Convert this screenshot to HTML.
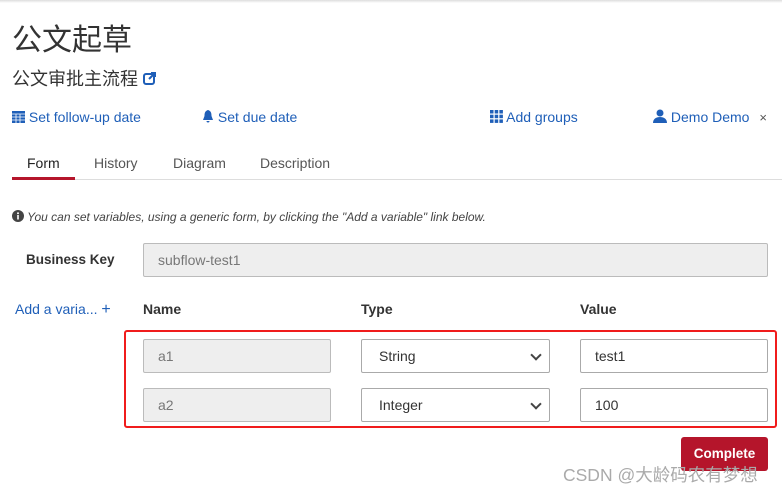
<!DOCTYPE html>
<html><head><meta charset="utf-8"><style>
*{margin:0;padding:0;box-sizing:border-box}
body{width:782px;height:493px;background:#fff;position:relative;overflow:hidden;font-family:"Liberation Sans","Noto Sans CJK SC",sans-serif;color:#333}
.a{position:absolute;white-space:nowrap}
.lnk{color:#1f5fb8;font-size:14px}
.inp{position:absolute;border:1px solid #aaa;border-radius:2px;height:34px;font-size:14px;line-height:32px;padding-left:14px;color:#333;background:#fff}
.ro{background:#eee;color:#777;border-color:#bbb}
.sel::after{content:"";position:absolute;right:9px;top:11px;width:6px;height:6px;border-right:2px solid #444;border-bottom:2px solid #444;transform:rotate(45deg)}
.h{font-weight:bold;font-size:14px;color:#333}
</style></head><body>
<div class="a" style="left:0;top:0;width:782px;height:3px;background:linear-gradient(#ddd,#fff)"></div>
<div class="a" style="left:12px;top:15px;font-size:30px;color:#333">公文起草</div>
<div class="a" style="left:12px;top:65px;font-size:18px;color:#333">公文审批主流程 <svg width="13" height="13" viewBox="0 0 13 13" style="vertical-align:0"><rect x="1" y="2" width="10" height="10" rx="2" fill="none" stroke="#1f5fb8" stroke-width="2"/><path d="M6 7L12 1M8 1h4v4" stroke="#1f5fb8" stroke-width="2" fill="none"/></svg></div>
<div class="a lnk" style="left:12px;top:109px"><svg width="13" height="13" viewBox="0 0 13 13" style="vertical-align:-1px"><rect x="0" y="1" width="13" height="12" fill="#1f5fb8"/><path d="M0 4h13M0 7h13M0 10h13M4 4v9M8 4v9" stroke="#fff" stroke-width="0.8"/></svg> Set follow-up date</div>
<div class="a lnk" style="left:202px;top:109px"><svg width="12" height="13" viewBox="0 0 12 13" style="vertical-align:-1px"><path d="M6 0C3 1 2.5 3 2.5 6L1 10h10L9.5 6C9.5 3 9 1 6 0z M4.5 11a1.5 1.5 0 0 0 3 0z" fill="#1f5fb8"/></svg> Set due date</div>
<div class="a lnk" style="left:490px;top:109px"><svg width="13" height="13" viewBox="0 0 13 13" style="vertical-align:-1px" fill="#1f5fb8"><rect x="0" y="0" width="3.5" height="3.5"/><rect x="4.7" y="0" width="3.5" height="3.5"/><rect x="9.4" y="0" width="3.5" height="3.5"/><rect x="0" y="4.7" width="3.5" height="3.5"/><rect x="4.7" y="4.7" width="3.5" height="3.5"/><rect x="9.4" y="4.7" width="3.5" height="3.5"/><rect x="0" y="9.4" width="3.5" height="3.5"/><rect x="4.7" y="9.4" width="3.5" height="3.5"/><rect x="9.4" y="9.4" width="3.5" height="3.5"/></svg> Add groups</div>
<div class="a lnk" style="left:653px;top:109px"><svg width="14" height="14" viewBox="0 0 14 14" style="vertical-align:-1px" fill="#1f5fb8"><circle cx="7" cy="4" r="3.5"/><path d="M0 14c0-4 3-6 7-6s7 2 7 6z"/></svg> Demo Demo <span style="color:#555;font-size:13px;margin-left:6px">×</span></div>
<div class="a" style="left:27px;top:155px;font-size:14px;color:#222">Form</div>
<div class="a" style="left:94px;top:155px;font-size:14px;color:#555">History</div>
<div class="a" style="left:173px;top:155px;font-size:14px;color:#555">Diagram</div>
<div class="a" style="left:260px;top:155px;font-size:14px;color:#555">Description</div>
<div class="a" style="left:12px;top:179px;width:770px;height:1px;background:#ddd"></div>
<div class="a" style="left:12px;top:177px;width:63px;height:3px;background:#b5152b"></div>
<div class="a" style="left:12px;top:210px;font-size:12px;font-style:italic;color:#444"><svg width="12" height="12" viewBox="0 0 12 12" style="vertical-align:-1px"><circle cx="6" cy="6" r="6" fill="#444"/><rect x="5.2" y="5" width="1.6" height="4.5" fill="#fff"/><circle cx="6" cy="3.3" r="1" fill="#fff"/></svg> You can set variables, using a generic form, by clicking the "Add a variable" link below.</div>
<div class="a h" style="left:26px;top:252px;font-size:13.5px">Business Key</div>
<div class="inp ro" style="left:143px;top:243px;width:625px">subflow-test1</div>
<div class="a lnk" style="left:15px;top:301px">Add a varia... <span style="font-size:16px">+</span></div>
<div class="a h" style="left:143px;top:301px">Name</div>
<div class="a h" style="left:361px;top:301px">Type</div>
<div class="a h" style="left:580px;top:301px">Value</div>
<div class="a" style="left:124px;top:330px;width:653px;height:98px;border:2px solid #f01c1c;border-radius:3px"></div>
<div class="inp ro" style="left:143px;top:339px;width:188px">a1</div>
<div class="inp sel" style="left:361px;top:339px;width:189px;padding-left:17px">String</div>
<div class="inp" style="left:580px;top:339px;width:188px">test1</div>
<div class="inp ro" style="left:143px;top:388px;width:188px">a2</div>
<div class="inp sel" style="left:361px;top:388px;width:189px;padding-left:17px">Integer</div>
<div class="inp" style="left:580px;top:388px;width:188px">100</div>
<div class="a" style="left:681px;top:437px;width:87px;height:34px;background:#b5152b;border-radius:3px;color:#fff;font-weight:bold;font-size:13.5px;text-align:center;line-height:34px">Complete</div>
<div class="a" style="left:563px;top:462px;font-size:17.5px;color:#aaa">CSDN @大龄码农有梦想</div>
</body></html>
